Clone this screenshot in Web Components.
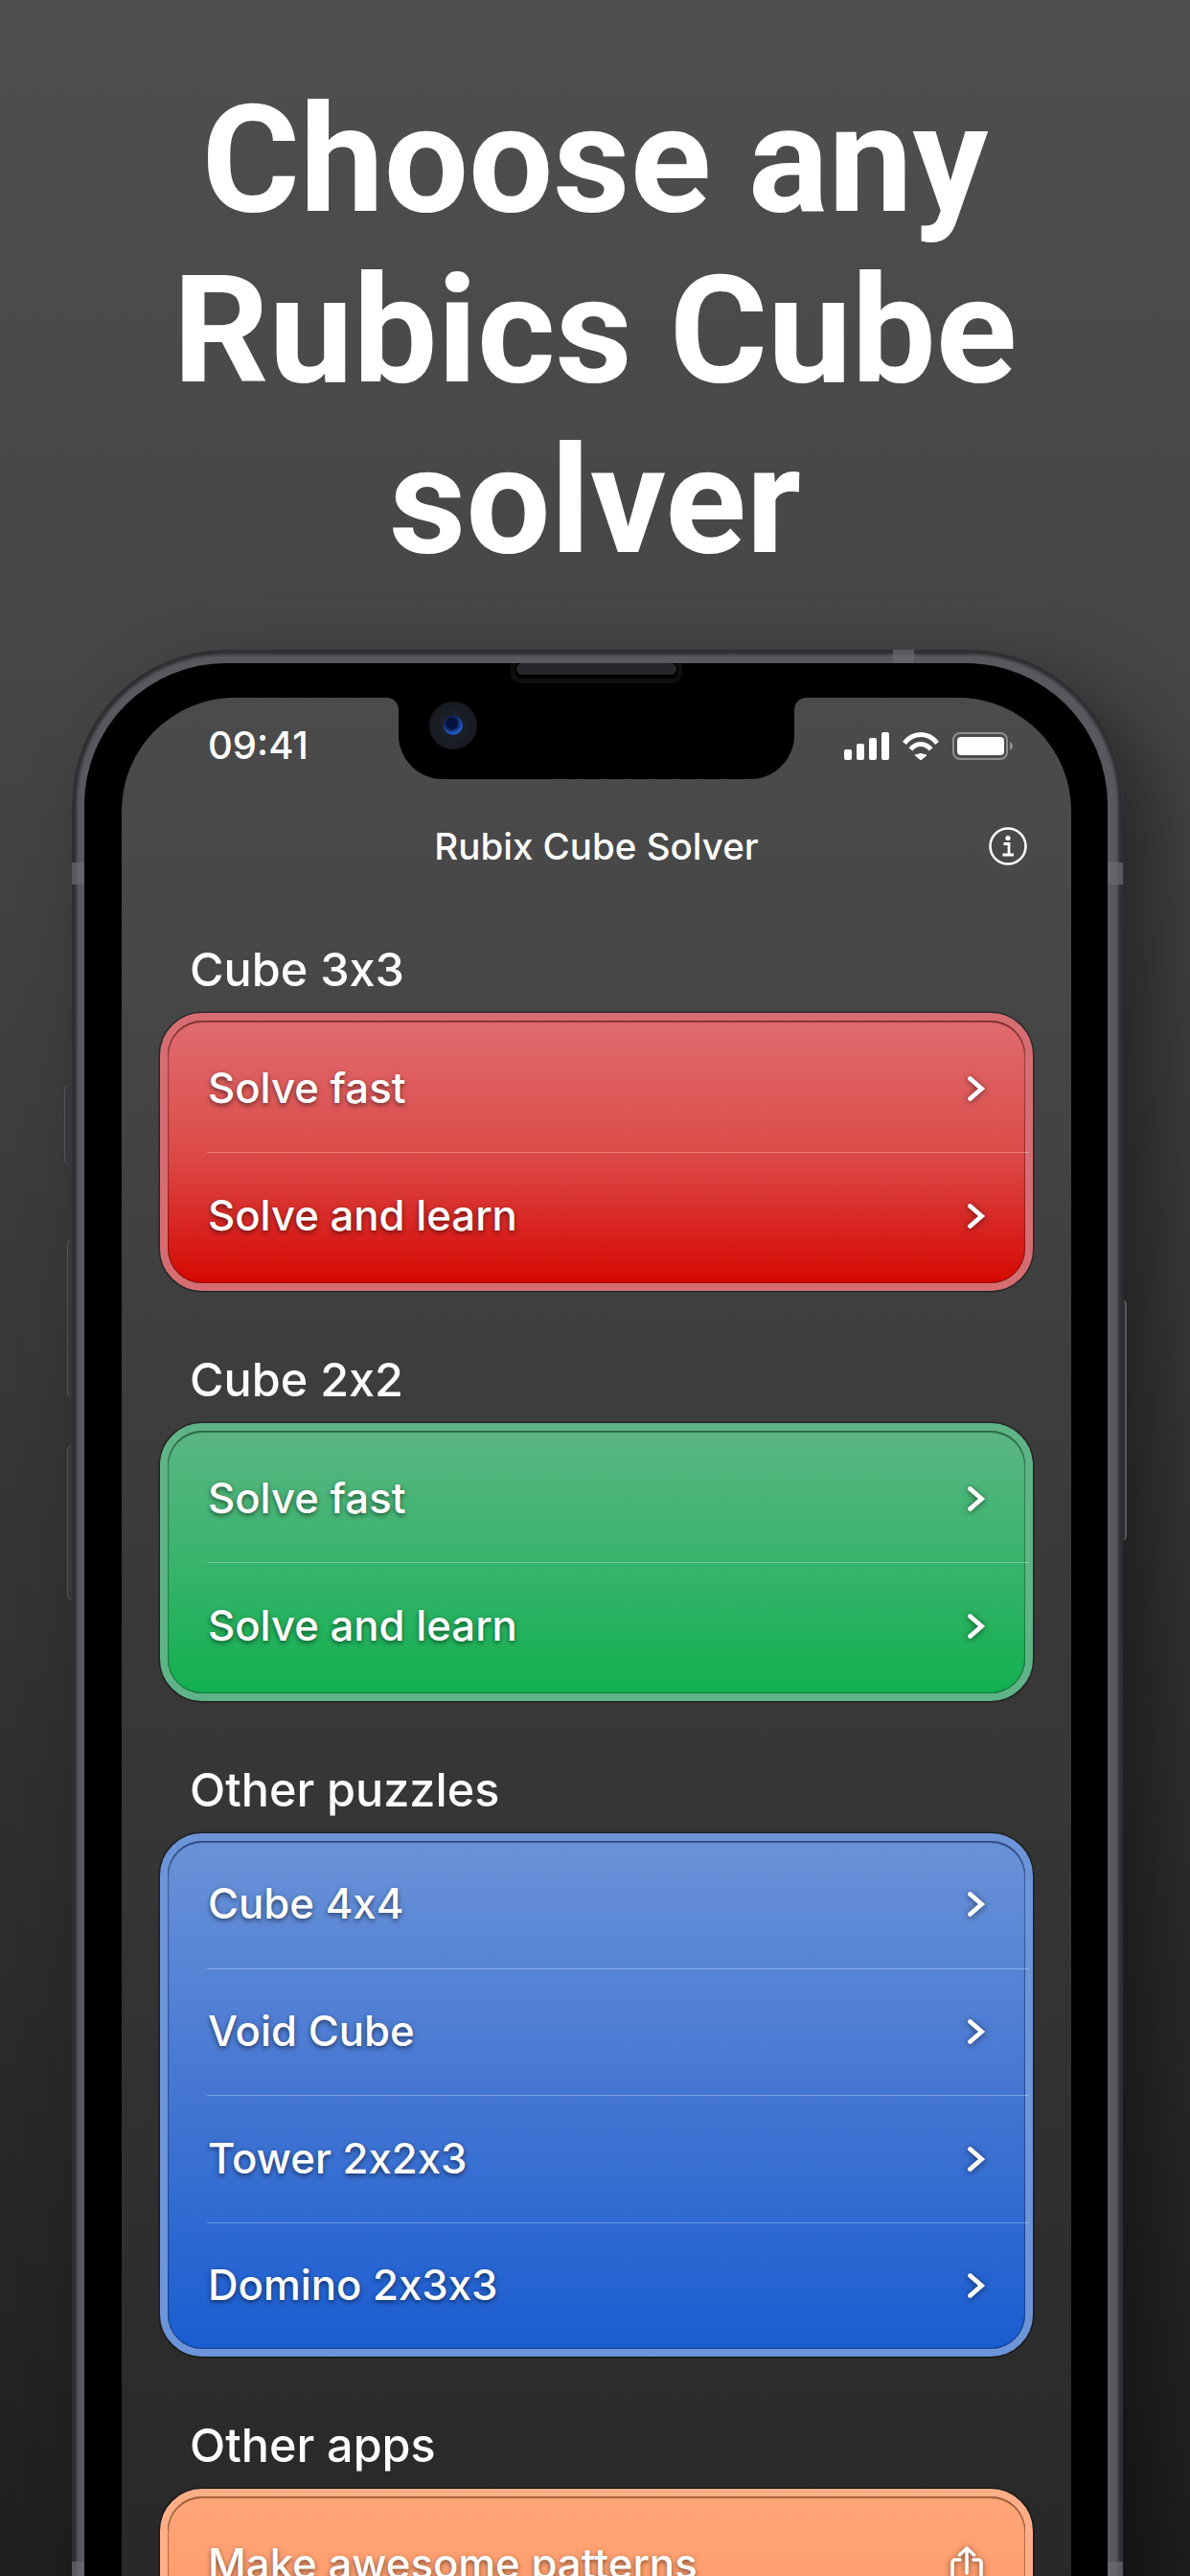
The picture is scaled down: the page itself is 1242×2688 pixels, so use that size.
<!DOCTYPE html>
<html lang="en">
<head>
<meta charset="utf-8">
<title>Rubix Cube Solver</title>
<style>
html,body{margin:0;padding:0;height:2688px;overflow:hidden;background:#333}
</style>
</head>
<body>
<store-page>
  <phone-frame>
    <status-bar></status-bar>
    <nav-bar>Rubix Cube Solver</nav-bar>
    <list-section heading="Cube 3x3" tone="red">
      <list-row>Solve fast</list-row>
      <list-row>Solve and learn</list-row>
    </list-section>
    <list-section heading="Cube 2x2" tone="green">
      <list-row>Solve fast</list-row>
      <list-row>Solve and learn</list-row>
    </list-section>
    <list-section heading="Other puzzles" tone="blue">
      <list-row>Cube 4x4</list-row>
      <list-row>Void Cube</list-row>
      <list-row>Tower 2x2x3</list-row>
      <list-row>Domino 2x3x3</list-row>
    </list-section>
    <list-section heading="Other apps" tone="orange">
      <list-row icon="share">Make awesome patterns</list-row>
    </list-section>
  </phone-frame>
</store-page>
<script>
function def(name, html, proto){
  const t=document.createElement('template'); t.innerHTML=html;
  customElements.define(name,class extends HTMLElement{
    constructor(){super();this.attachShadow({mode:'open'}).appendChild(t.content.cloneNode(true));}
    connectedCallback(){ if(proto) proto.call(this); }
  });
}
def('store-page',`<style>
:host{display:block;height:2688px;overflow:hidden;background:linear-gradient(180deg,#4f4f4f 0%,#454545 28%,#333 62%,#1f1f1f 100%);}
h1{margin:0;padding-top:78px;height:533px;font:700 156.500px/178px Roboto,sans-serif;color:#fff;text-align:center;}
</style><h1>Choose any<br>Rubics Cube<br>solver</h1><slot></slot>`);

def('phone-frame',`<style>
:host{display:block;position:relative;margin:67px 0 0 75px;width:1097px;height:2100px;}
.body{box-sizing:border-box;height:100%;padding:14px 16px 0 13px;border-radius:160px 160px 0 0;
 background:#58595e;
 box-shadow:34px 30px 80px rgba(0,0,0,.42), inset 0 0 3px 5px #2e2f33;}
.bezel{box-sizing:border-box;height:100%;padding:36px 38px 0 39px;background:#000;border-radius:148px 148px 0 0;}
.screen{height:100%;border-radius:118px 118px 0 0;overflow:hidden;background:linear-gradient(180deg,#4b4b4b 0,#474747 14%,#3d3d3d 35%,#333 65%,#2a2a2a 90%,#272727 100%);color:#fff;font-family:Inter,sans-serif;font-feature-settings:"calt" 0;}
.notch{position:absolute;left:341px;top:50px;width:413px;height:85px;background:#000;border-radius:0 0 46px 46px;}
.notch::before,.notch::after{content:"";position:absolute;top:0;width:12px;height:12px;background:radial-gradient(circle at 0 100%,transparent 11.500px,#000 12px);}
.notch::before{left:-12px}
.notch::after{right:-12px;transform:scaleX(-1)}
.speaker{position:absolute;left:458px;top:14px;width:179px;height:21px;box-sizing:border-box;border:5px solid #0e0e10;border-top:0;border-radius:0 0 10px 10px;background:#000;}
.speaker i{display:block;height:12px;margin:0 1px;border-radius:6px;background:#26272a;}
.cam{position:absolute;left:373px;top:54px;width:50px;height:50px;border-radius:50%;background:radial-gradient(circle,#202532 0,#1b1d26 45%,#15161c 100%);}
.cam::after{content:"";position:absolute;left:15px;top:15px;width:20px;height:20px;border-radius:50%;background:radial-gradient(circle at 42% 38%,#06123a 0 32%,#2057c4 62%,#12347f 100%);}
.band{position:absolute;background:#6a6b70;opacity:.7}
.b1{left:0;top:222px;width:13px;height:23px}.b2{right:0;top:222px;width:16px;height:23px}
.b3{left:857px;top:0;width:22px;height:14px}
.b4{left:0;top:1995px;width:13px;height:20px}.b5{right:0;top:1995px;width:16px;height:20px}
.btn{position:absolute;background:#37383c;border-radius:5px 0 0 5px;box-shadow:inset 1px 0 0 #55565a;}
.m{left:-8px;top:454px;width:8px;height:83px}
.u{left:-5px;top:615px;width:5px;height:165px}
.d{left:-5px;top:830px;width:5px;height:162px}
.p{right:-4px;top:679px;width:4px;height:250px;border-radius:0 4px 4px 0;box-shadow:inset -2px 0 0 #55565a;background:#2b2c30}
</style>
<div class="body"><div class="bezel"><div class="screen"><slot></slot></div></div></div>
<div class="btn m"></div><div class="btn u"></div><div class="btn d"></div><div class="btn p"></div>
<div class="band b1"></div><div class="band b2"></div><div class="band b3"></div><div class="band b4"></div><div class="band b5"></div>
<div class="notch"></div><div class="speaker"><i></i></div><div class="cam"></div>`);

def('status-bar',`<style>
:host{display:flex;align-items:center;justify-content:space-between;height:100px;padding:0 61px 0 90px;box-sizing:border-box;}
.t{font:500 40px/1 Inter,sans-serif;color:#fff;}
.i{display:flex;align-items:center;gap:13px}
svg{display:block}
</style>
<span class="t">09:41</span>
<span class="i">
<svg width="47" height="29" viewBox="0 0 47 29"><g fill="#fff"><rect x="0" y="18" width="8" height="11" rx="2"/><rect x="13" y="12" width="8" height="17" rx="2"/><rect x="26" y="6" width="8" height="23" rx="2"/><rect x="39" y="0" width="8" height="29" rx="2"/></g></svg>
<svg width="40" height="29" viewBox="0 0 40 29"><path d="M20 22.500 L26 24 L20 29 L14 24Z" fill="#fff" stroke="#fff" stroke-width="1" stroke-linejoin="round"/><g fill="none" stroke="#fff" stroke-width="5"><path d="M3 11.500C12-.5 28-.5 37 11.500"/><path d="M9.500 18C15 10.500 25 10.500 30.500 18"/></g></svg>
<svg width="63" height="29" viewBox="0 0 63 29"><rect x="1" y="1" width="56" height="27" rx="7" fill="none" stroke="#8f8f8f" stroke-width="2"/><rect x="5" y="5" width="49" height="19" rx="4" fill="#fff"/><path d="M60 10c2 1 3 3 3 4.500s-1 3.500-3 4.500z" fill="#8f8f8f"/></svg>
</span>`);

def('nav-bar',`<style>
:host{display:flex;align-items:center;justify-content:center;position:relative;height:110px;font:500 38.500px/1 Inter,sans-serif;color:#fff;}
svg{position:absolute;right:46px;top:35px}
</style><slot></slot>
<svg width="40" height="40" viewBox="0 0 40 40"><circle cx="20" cy="20" r="18.500" fill="none" stroke="#fff" stroke-width="2.500"/><circle cx="20" cy="11.500" r="2.600" fill="#fff"/><path d="M15.500 17.500H21V28.500M14.500 29H26" fill="none" stroke="#fff" stroke-width="2.800"/></svg>`);

const tones={
 red:{top:'#e06c6f',mid:'#dc4b49',bot:'#d60803',edge:'#d66d72',line:'rgba(60,0,0,.4)'},
 green:{top:'#5bb583',mid:'#38b46c',bot:'#12b04f',edge:'#5eb487',line:'rgba(0,50,20,.4)'},
 blue:{top:'#6a92d8',mid:'#4476d2',bot:'#1a5dd1',edge:'#6c94d8',line:'rgba(0,20,70,.4)'},
 orange:{top:'#ffa679',mid:'#ff9f70',bot:'#ff9560',edge:'#ffae86',line:'rgba(90,40,10,.42)'}
};
def('list-section',`<style>
:host{display:block;padding:44px 40px 19px}
h2{margin:0 0 15px;padding-left:31px;font:500 48.500px/60px Inter,sans-serif;color:#fff;font-feature-settings:"calt" 0;}
.card{box-sizing:border-box;border:8px solid var(--edge);border-radius:44px;position:relative;
 background:var(--fill) padding-box;box-shadow:0 0 0 1.500px rgba(0,0,0,.4);padding:var(--pad) 0;}
.card::before{content:"";position:absolute;inset:0;border-radius:36px;box-shadow:inset 0 2px 1px var(--line),inset 0 0 1px 1px var(--line);pointer-events:none}
</style><h2></h2><div class="card"><slot></slot></div>`,function(){
  const t=tones[this.getAttribute('tone')];
  const s=this.style;
  s.setProperty('--edge',t.edge);s.setProperty('--line',t.line);
  s.setProperty('--fill',`linear-gradient(180deg,${t.top} 0%,${t.mid} 50%,${t.bot} 100%)`);
  const n=this.children.length;
  s.setProperty('--pad',n===4?'0':'4px');
  s.setProperty('--row',n===4?'132.500px':'133px');
  this.shadowRoot.querySelector('h2').textContent=this.getAttribute('heading');
});
def('list-row',`<style>
:host{display:flex;align-items:center;justify-content:space-between;box-sizing:border-box;height:var(--row,133px);margin:0 -4px 0 41px;padding:0 45px 0 1px;
 font:450 43.700px/1 Inter,sans-serif;font-feature-settings:"calt" 0;color:#fff;text-shadow:0 2px 5px rgba(0,0,0,.55);position:relative;}
:host(:not(:first-child)){border-top:1.500px solid rgba(255,255,255,.3)}
svg{display:block;filter:drop-shadow(0 1px 3px rgba(0,0,0,.55));}
.share{margin:6px 3px 0 0}
</style><slot></slot><span id="ic"></span>`,function(){
  const ic=this.shadowRoot.getElementById('ic');
  ic.innerHTML=this.getAttribute('icon')==='share'
   ?'<svg class="share" width="34" height="44" viewBox="0 0 34 44"><path d="M10 14H5a3 3 0 0 0-3 3v22a3 3 0 0 0 3 3h24a3 3 0 0 0 3-3V17a3 3 0 0 0-3-3h-5M17 28V2M9.500 9 17 2l7.500 7" fill="none" stroke="#fff" stroke-width="3.500" stroke-linecap="round" stroke-linejoin="round"/></svg>'
   :'<svg width="20" height="28" viewBox="0 0 20 28"><path d="M3.500 3.500 15.500 14 3.500 24.500" fill="none" stroke="#fff" stroke-width="4.800" stroke-linecap="round" stroke-linejoin="miter"/></svg>';
});
</script>
</body>
</html>
